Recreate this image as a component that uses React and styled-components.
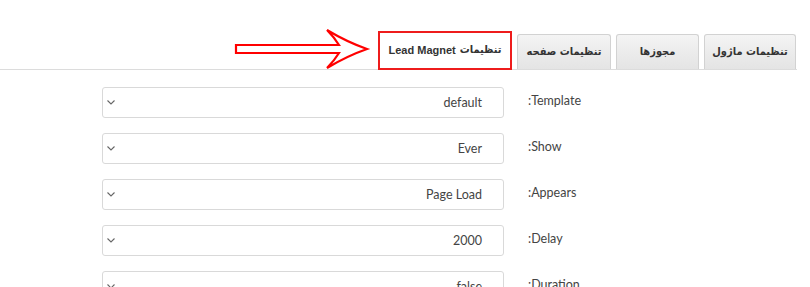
import React from 'react';
import styled, { createGlobalStyle } from 'styled-components';

const GlobalStyle = createGlobalStyle`
  html, body {
    margin: 0;
    padding: 0;
    background: #fff;
  }
  body {
    font-family: Lato, 'Open Sans', sans-serif;
  }
`;

const tabs = [
  { id: 'module', label: 'تنظیمات ماژول', width: 92 },
  { id: 'perms', label: 'مجوزها', width: 83 },
  { id: 'page', label: 'تنظیمات صفحه', width: 94 },
  { id: 'lead', label: 'تنظیمات', latin: 'Lead Magnet', width: 134, active: true },
];

const fields = [
  { label: 'Template:', value: 'default' },
  { label: 'Show:', value: 'Ever' },
  { label: 'Appears:', value: 'Page Load' },
  { label: 'Delay:', value: '2000' },
  { label: 'Duration:', value: 'false' },
];

function Arrow() {
  return (
    <ArrowSvg width="140" height="42" viewBox="0 0 140 42">
      <path
        d="M3,17 L106,17 Q101,9 94,2 Q114,14 134,21 Q114,28 94,40 Q101,33 106,25 L3,25 Z"
        fill="#fff"
        stroke="#f00"
        strokeWidth="2.2"
        strokeLinejoin="miter"
      />
    </ArrowSvg>
  );
}

function Chevron() {
  return (
    <svg width="8" height="5" viewBox="0 0 8 5">
      <path d="M0.5,0.5 L4,4 L7.5,0.5" fill="none" stroke="#666" strokeWidth="1.1" />
    </svg>
  );
}

export default function App() {
  return (
    <Page>
      <GlobalStyle />
      <TabBar>
        {tabs.map(t => (
          <Tab key={t.id} active={t.active} w={t.width}>
            {t.label}
            {t.latin && <Latin>{t.latin}</Latin>}
          </Tab>
        ))}
        <Arrow />
      </TabBar>
      <Form>
        {fields.map(f => (
          <Row key={f.label}>
            <Select>
              <Chevron />
              <Value>{f.value}</Value>
            </Select>
            <Label>{f.label}</Label>
          </Row>
        ))}
      </Form>
    </Page>
  );
}

const Page = styled.div`
  width: 810px;
  height: 287px;
  overflow: hidden;
`;

const TabBar = styled.div`
  display: flex;
  direction: rtl;
  align-items: flex-end;
  gap: 5px;
  width: 797px;
  height: 70px;
  padding-right: 1px;
  box-sizing: border-box;
  border-bottom: 1px solid #dcdcdc;
`;

const Tab = styled.div`
  box-sizing: border-box;
  display: flex;
  align-items: center;
  justify-content: center;
  gap: 4px;
  width: ${p => p.w}px;
  height: ${p => (p.active ? '39px' : '35px')};
  padding-bottom: ${p => (p.active ? '2px' : '1px')};
  margin-bottom: ${p => (p.active ? '-1px' : '0')};
  font-family: 'DejaVu Sans Condensed', 'DejaVu Sans', sans-serif;
  font-stretch: condensed;
  font-size: 11px;
  font-weight: bold;
  color: #333;
  white-space: nowrap;
  border: ${p => (p.active ? '2px solid #ee1c1c' : '1px solid #d2d2d2')};
  border-bottom: ${p => (p.active ? '2px solid #ee1c1c' : 'none')};
  border-radius: ${p => (p.active ? '0' : '3px 3px 0 0')};
  background: ${p => (p.active ? '#fff' : 'linear-gradient(#f4f4f4, #e4e4e4)')};
`;

const Latin = styled.span`
  font-family: 'Liberation Sans', sans-serif;
  font-stretch: normal;
  font-size: 11px;
`;

const ArrowSvg = styled.svg`
  display: block;
  margin-bottom: -1px;
`;

const Form = styled.div`
  display: flex;
  flex-direction: column;
  gap: 15px;
  padding: 17px 0 0 102px;
`;

const Row = styled.div`
  display: flex;
  align-items: center;
  gap: 24px;
`;

const Select = styled.div`
  box-sizing: border-box;
  width: 402px;
  height: 31px;
  display: flex;
  align-items: center;
  justify-content: space-between;
  padding: 0 21px 0 4px;
  border: 1px solid #d9d9d9;
  border-radius: 3px;
  background: #fff;
`;

const Value = styled.span`
  font-size: 12.5px;
  color: #444;
`;

const Label = styled.span`
  direction: rtl;
  text-align: left;
  font-size: 12.5px;
  color: #444;
  margin-top: -4px;
`;
